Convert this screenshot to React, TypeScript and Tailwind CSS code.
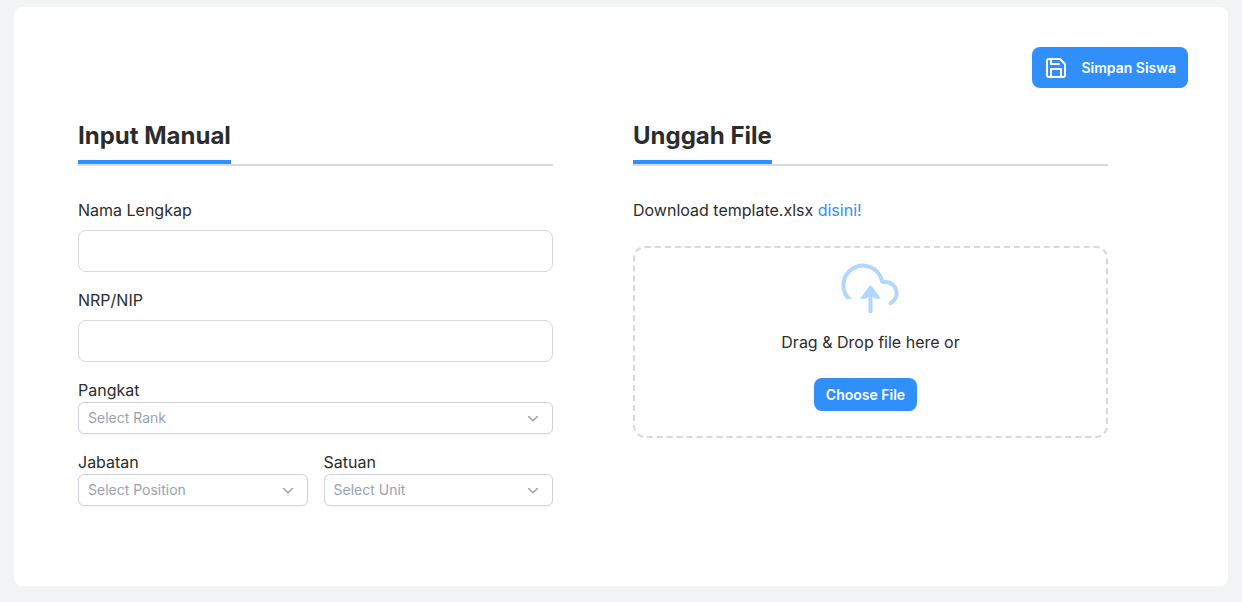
import type { ReactNode } from 'react'
import { FiSave } from 'react-icons/fi'

interface SelectFieldProps {
  id: string
  label: string
  placeholder: string
  options: string[]
}

function SectionTitle({ children }: { children: ReactNode }) {
  return (
    <div className="flex border-b-2 border-[#d9d9d9]">
      <h2 className="border-b-4 border-[#318ffc] pb-2 text-2xl font-bold">{children}</h2>
    </div>
  )
}

function TextField({ id, label }: { id: string; label: string }) {
  return (
    <div className="flex flex-col gap-2">
      <label htmlFor={id}>{label}</label>
      <input
        id={id}
        type="text"
        className="h-[42px] w-full rounded-lg border border-[#d9d9d9] bg-white px-3 text-sm outline-none focus:border-[#318ffc]"
      />
    </div>
  )
}

function SelectField({ id, label, placeholder, options }: SelectFieldProps) {
  return (
    <div className="flex flex-1 flex-col">
      <label htmlFor={id}>{label}</label>
      <div className="relative">
        <select
          id={id}
          defaultValue=""
          className="h-8 w-full appearance-none rounded-md border border-[#cfd1dc] bg-white pr-8 pl-[9px] text-sm text-gray-400 shadow-xs outline-none"
        >
          <option value="" disabled>
            {placeholder}
          </option>
          {options.map((option) => (
            <option key={option}>{option}</option>
          ))}
        </select>
        <svg
          viewBox="0 0 20 20"
          fill="none"
          stroke="currentColor"
          strokeWidth="1.8"
          strokeLinecap="round"
          strokeLinejoin="round"
          className="pointer-events-none absolute top-2 right-3 size-4 text-gray-400"
        >
          <path d="M4.5 8l5.5 5.5 5.5-5.5" />
        </svg>
      </div>
    </div>
  )
}

function CloudUploadIcon() {
  return (
    <svg viewBox="0 0 64 64" fill="none" strokeWidth="4" strokeLinecap="round" className="size-16 text-[#b1d6ff]">
      <clipPath id="cloud-edge">
        <path d="M0 0h64v64H30V43H0z" />
      </clipPath>
      <path
        stroke="currentColor"
        clipPath="url(#cloud-edge)"
        d="M11.5 44.2A19.5 19.5 0 1 1 43 25C43.5 26 44.5 26 46.5 26A11.2 11.2 0 0 1 51.5 47.2"
      />
      <path stroke="currentColor" d="M31.5 32v23.5" />
      <path fill="currentColor" d="M30 30.6Q31.5 29.4 33 30.6L42 42.7H37Q35.5 42.7 33.5 40.5H29.5Q27.5 42.7 26 42.7H21z" />
    </svg>
  )
}

export default function App() {
  return (
    <div className="min-h-screen bg-[#f2f3f5] px-3.5 pt-[7px] pb-4 font-['Inter',sans-serif] text-[#2c2c2c]">
      <main className="rounded-lg bg-white px-10 pt-10 pb-20">
        <div className="flex justify-end">
          <button
            type="button"
            className="flex h-[41px] items-center gap-[13px] rounded-lg bg-[#318ffc] px-3 text-sm font-semibold text-white"
          >
            <FiSave className="size-6" />
            Simpan Siswa
          </button>
        </div>

        <div className="mt-8 grid grid-cols-2 gap-20 pr-20 pl-6">
          <section>
            <SectionTitle>Input Manual</SectionTitle>
            <form className="mt-8 flex flex-col gap-4">
              <TextField id="nama" label="Nama Lengkap" />
              <TextField id="nrp" label="NRP/NIP" />
              <SelectField id="pangkat" label="Pangkat" placeholder="Select Rank" options={[]} />
              <div className="flex gap-4">
                <SelectField id="jabatan" label="Jabatan" placeholder="Select Position" options={[]} />
                <SelectField id="satuan" label="Satuan" placeholder="Select Unit" options={[]} />
              </div>
            </form>
          </section>

          <section>
            <SectionTitle>Unggah File</SectionTitle>
            <p className="mt-8">
              Download template.xlsx{' '}
              <a href="#template" className="text-[#318ffc]">
                disini!
              </a>
            </p>
            <div className="mt-6 flex flex-col items-center rounded-xl border-2 border-dashed border-[#d9d9d9] pt-2 pb-[25px]">
              <CloudUploadIcon />
              <p className="mt-[10px]">Drag &amp; Drop file here or</p>
              <button
                type="button"
                className="mt-6 mr-[10px] h-[33px] rounded-lg bg-[#318ffc] px-3 text-sm font-semibold text-white"
              >
                Choose File
              </button>
            </div>
          </section>
        </div>
      </main>
    </div>
  )
}
